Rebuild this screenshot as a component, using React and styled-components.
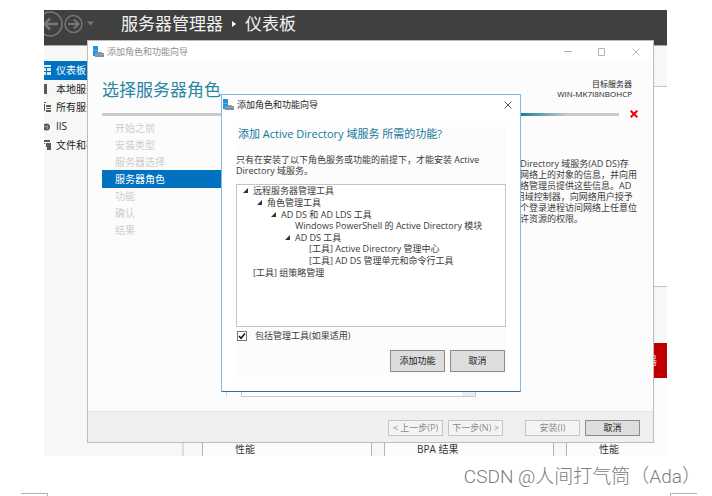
// App.jsx
import React, { useState } from "react";
import styled, { createGlobalStyle } from "styled-components";

const GlobalStyle = createGlobalStyle`
  * {
    box-sizing: border-box;
  }

  body {
    margin: 0;
    background: #ffffff;
    color: #3a3a3a;
    font-family: "Open Sans", "Noto Sans CJK SC", sans-serif;
    font-size: 9px;
  }

  h1, h2, p, ul {
    margin: 0;
    padding: 0;
    font-weight: 400;
  }

  ul {
    list-style: none;
  }

  button, input {
    font: inherit;
    margin: 0;
  }
`;

const Page = styled.div`
  min-height: 100vh;
  display: flex;
  flex-direction: column;
  padding-top: 10px;
`;

const Desktop = styled.div`
  position: relative;
  flex: 1;
  display: flex;
  flex-direction: column;
  margin: 0 45px 0 44px;
  overflow: hidden;
  background: #f7f7f7;
`;

const TopBar = styled.header`
  display: flex;
  align-items: flex-start;
  height: 36px;
  background: #404040;
  border-bottom: 1px solid #a8a8a8;
  color: #f2f2f2;
`;

const HistoryIcons = styled.svg`
  width: 56px;
  height: 30px;
  margin-right: 21px;
`;

const Crumbs = styled.h1`
  display: flex;
  align-items: center;
  gap: 9px;
  font-size: 17px;
  line-height: 28px;
`;

const Workspace = styled.div`
  flex: 1;
  display: flex;
`;

const Sidebar = styled.nav`
  width: 140px;
  padding-top: 15px;
  border-right: 2px solid #dedede;
`;

const SideList = styled.ul`
  display: grid;
  grid-auto-rows: 1fr;
  height: 93px;
`;

const SideLink = styled.a`
  display: flex;
  align-items: center;
  gap: 5px;
  height: 100%;
  font-size: 10px;
  line-height: 16px;
  text-decoration: none;
  white-space: nowrap;
  color: ${(props) => (props.$active ? "#ffffff" : "#222222")};
  background: ${(props) => (props.$active ? "#0072c0" : "transparent")};

  svg {
    width: 7px;
    height: 10px;
  }
`;

const Main = styled.main`
  flex: 1;
  display: flex;
  flex-direction: column;
  gap: 56px;
  padding: 40px 0 0 18px;
`;

const Welcome = styled.section`
  height: 201px;
  background: #ffffff;
  border: solid #c4c4c4;
  border-width: 1px 0 1px 1px;
`;

const Tiles = styled.div`
  flex: 1;
  display: grid;
  grid-template-columns: 170px 170px 1fr;
  gap: 12px;
`;

const Tile = styled.section`
  display: flex;
  flex-direction: column;
  justify-content: space-between;
  background: #fcfcfc;
  border: solid #b4b4b4;
  border-width: 0 1px;
  font-size: 10px;
  line-height: 14px;
  white-space: nowrap;
  overflow: hidden;

  &:last-child {
    border-right: none;
  }
`;

const TileHeader = styled.div`
  height: 35px;
  padding-left: 35px;
  line-height: 35px;
  font-size: 11px;
  color: #f6dcdc;
  background: #c00000;
`;

const TileRow = styled.a`
  padding-left: 32px;
  color: #333333;
  text-decoration: none;
`;

const Wizard = styled.section`
  position: absolute;
  top: 30px;
  right: 13px;
  bottom: 13px;
  left: 43px;
  display: flex;
  flex-direction: column;
  background: #fcfcfc;
  border: 1px solid #bdbdbd;
`;

const TitleBar = styled.div`
  display: flex;
  align-items: center;
  gap: 3px;
  height: ${(props) => (props.$small ? "19px" : "21px")};
  line-height: 14px;
  padding-left: ${(props) => (props.$small ? "1px" : "5px")};
  background: #ffffff;
  color: ${(props) => (props.$small ? "#222222" : "#8f8f8f")};
`;

const TitleIcon = styled.svg`
  width: 11px;
  height: 11px;
`;

const TitleText = styled.span`
  flex: 1;
`;

const WindowButton = styled.button`
  display: flex;
  align-items: center;
  justify-content: center;
  width: ${(props) => (props.$small ? "24px" : "34px")};
  height: 100%;
  padding: 0;
  border: none;
  background: none;
  color: ${(props) => (props.$small ? "#444444" : "#b4b4b4")};

  svg {
    width: 8px;
    height: 8px;
  }
`;

const WindowControls = styled.div`
  display: flex;
  height: 100%;
`;

const WizardHeader = styled.header`
  display: flex;
  justify-content: space-between;
  align-items: center;
  height: 48px;
  padding: 7px 21px 0 14px;
`;

const WizardTitle = styled.h1`
  font-size: 17px;
  line-height: 24px;
  color: #2b86a5;
`;

const Target = styled.div`
  padding-bottom: 2px;
  font-size: 8px;
  line-height: 10px;
  text-align: right;
  color: #222222;
`;

const Progress = styled.div`
  display: flex;
  align-items: center;
  gap: 11px;
  height: 8px;
  padding: 0 15px 0 14px;

  svg {
    width: 8px;
    height: 8px;
  }
`;

const ProgressTrack = styled.div`
  flex: 1;
  height: 3px;
  background: linear-gradient(
    to right,
    #cbcbcb 0,
    #cbcbcb 40%,
    #1c7c9e 62%,
    #1c7c9e 81%,
    #cbcbcb 90%
  );
`;

const WizardBody = styled.div`
  flex: 1;
  display: flex;
  padding: 0 13px 14px 14px;
`;

const Steps = styled.nav`
  width: 125px;
  padding-top: 1px;
  border-right: 1px solid #d8d8d8;
`;

const StepList = styled.ul`
  display: grid;
  grid-auto-rows: 1fr;
  height: 120px;
`;

const Step = styled.li`
  display: flex;
  align-items: center;
  padding-left: 13px;
  font-size: 10px;
  line-height: 16px;
  color: ${(props) => (props.$active ? "#ffffff" : "#cecece")};
  background: ${(props) => (props.$active ? "#0072c0" : "transparent")};
`;

const RoleBox = styled.div`
  display: flex;
  justify-content: flex-end;
  width: 235px;
  margin: 60px 17px 0 14px;
  background: #ffffff;
  border: 1px solid #c8c8c8;
`;

const RoleScroll = styled.div`
  width: 13px;
  background: #ececec;
`;

const Details = styled.p`
  flex: 1;
  padding-top: 40px;
  line-height: 11px;
  white-space: nowrap;
`;

const WizardFooter = styled.footer`
  display: flex;
  justify-content: flex-end;
  align-items: center;
  gap: 5px;
  height: 31px;
  padding: 2px 13px 0 0;
  background: #efefef;
  border-top: 1px solid #e6e6e6;
`;

const FooterGroup = styled.div`
  display: flex;
  gap: 5px;
  margin-right: 17px;
`;

const Button = styled.button`
  width: 55px;
  height: ${(props) => (props.$tall ? "22px" : "16px")};
  padding: 0;
  line-height: 12px;
  white-space: nowrap;
  color: #222222;
  background: #dddddd;
  border: 1px solid #8c8c8c;

  &:disabled {
    color: #8a8a8a;
    background: #f4f4f4;
    border-color: #c4c4c4;
  }
`;

const Dialog = styled.section`
  position: absolute;
  top: 84px;
  left: 177px;
  width: 300px;
  background: #ffffff;
  border: 1px solid #7fbbea;
  border-bottom-color: #2f6f9f;
`;

const DialogPanel = styled.div`
  margin: 13px 14px 14px;
  padding-bottom: 5px;
  background: #fcfcfc;
`;

const DialogTitle = styled.h2`
  padding-left: 2px;
  font-size: 11px;
  line-height: 14px;
  color: #14789b;
`;

const DialogText = styled.p`
  padding: 13px 0 8px;
  line-height: 11px;
  white-space: nowrap;
`;

const TreeBox = styled.div`
  height: 143px;
  background: #ffffff;
  border: 1px solid #c4c4c4;
`;

const Tree = styled.ul`
  display: grid;
  grid-auto-rows: 1fr;
  height: 93px;
`;

const TreeRow = styled.li`
  display: flex;
  align-items: center;
  gap: 5px;
  padding-left: ${(props) => 6 + props.$level * 14}px;
  line-height: 11px;
  white-space: nowrap;

  svg {
    width: 5px;
    height: 5px;
  }
`;

const CheckRow = styled.label`
  display: flex;
  align-items: center;
  gap: 8px;
  height: 18px;
  padding-left: 1px;
  line-height: 12px;
`;

const CheckBox = styled.span`
  display: grid;
  width: 10px;
  height: 10px;

  input,
  svg {
    grid-area: 1 / 1;
    width: 10px;
    height: 10px;
  }

  input {
    appearance: none;
    background: #ffffff;
    border: 1px solid #777777;
  }

  svg {
    display: none;
    pointer-events: none;
  }

  input:checked + svg {
    display: block;
  }
`;

const DialogActions = styled.div`
  display: flex;
  justify-content: flex-end;
  gap: 5px;
  padding: 5px 1px 0 0;
`;

const PageFooter = styled.footer`
  height: 40px;
  display: flex;
  flex-direction: column;
  justify-content: space-between;
  padding: 0 15px 0 21px;
`;

const Signature = styled.div`
  align-self: flex-end;
  margin-right: -4px;
  padding-top: 4px;
  font-family: Roboto, "Noto Sans CJK SC", sans-serif;
  font-size: 19px;
  font-weight: 300;
  line-height: 33px;
  white-space: nowrap;
  color: #7d7d7d;
`;

const Marks = styled.div`
  display: flex;
  justify-content: space-between;
  height: 3px;
`;

const Mark = styled.span`
  width: 27px;
  border: solid #b0b0b0;
  border-width: ${(props) => (props.$right ? "1px 0 0 1px" : "1px 1px 0 0")};
`;

const sideItems = [
  { label: "仪表板", icon: "dashboard" },
  { label: "本地服务器", icon: "local" },
  { label: "所有服务器", icon: "all" },
  { label: "IIS", icon: "iis" },
  { label: "文件和存储服务", icon: "files" },
];

const steps = ["开始之前", "安装类型", "服务器选择", "服务器角色", "功能", "确认", "结果"];

const tree = [
  { level: 0, label: "远程服务器管理工具", open: true },
  { level: 1, label: "角色管理工具", open: true },
  { level: 2, label: "AD DS 和 AD LDS 工具", open: true },
  { level: 3, label: "Windows PowerShell 的 Active Directory 模块" },
  { level: 3, label: "AD DS 工具", open: true },
  { level: 4, label: "[工具] Active Directory 管理中心" },
  { level: 4, label: "[工具] AD DS 管理单元和命令行工具" },
  { level: 0, label: "[工具] 组策略管理" },
];

const sideShapes = {
  dashboard: <path d="M0 0h7v2H0zM0 3h2v3H0zM3 3h4v3H3zM0 7h2v3H0zM3 7h4v3H3z" />,
  local: <path d="M0 0h3v10H0z" />,
  all: <path d="M0 0h2v1H0zM0 2h1v7H0zM2 3h5v2H2zM2 6h5v1H2zM2 8h5v2H2z" />,
  iis: (
    <>
      <circle cx="2.5" cy="6" r="3.5" />
      <path d="M0 6l3-1 1 1-1 2" stroke="#c9c9c9" strokeWidth="0.8" fill="none" />
    </>
  ),
  files: <path d="M0 0h6v2H0zM0 3h1v1H0zM2 3h5v7H3V7H2z" />,
};

function SideIcon({ name }) {
  return (
    <svg viewBox="0 0 7 10" fill={name === "dashboard" ? "#d9ecf8" : "#5a5a5a"}>
      {sideShapes[name]}
    </svg>
  );
}

function ServerIcon() {
  return (
    <TitleIcon viewBox="0 0 11 11">
      <path d="M0 0h5v10H0z" fill="#2394dc" />
      <path d="M0 4.5h5" stroke="#7cc3f0" strokeWidth="0.6" />
      <path d="M4.5 8V6.500h4V8" stroke="#8aa0ae" fill="none" />
      <path d="M2 7h9v4H2z" fill="#7892a5" />
      <path d="M2 8.5h9" stroke="#9db2c0" strokeWidth="0.6" />
    </TitleIcon>
  );
}

function CloseIcon() {
  return (
    <svg viewBox="0 0 8 8" fill="none" stroke="currentColor" strokeWidth="0.9">
      <path d="M0.5 0.5l7 7M7.5 0.5l-7 7" />
    </svg>
  );
}

function AddFeaturesDialog() {
  const [includeTools, setIncludeTools] = useState(true);

  return (
    <Dialog role="dialog" aria-labelledby="dialog-title">
      <TitleBar $small>
        <ServerIcon />
        <TitleText>添加角色和功能向导</TitleText>
        <WindowButton $small aria-label="关闭">
          <CloseIcon />
        </WindowButton>
      </TitleBar>
      <DialogPanel>
        <DialogTitle id="dialog-title">
          添加 Active Directory 域服务 所需的功能?
        </DialogTitle>
        <DialogText>
          只有在安装了以下角色服务或功能的前提下，才能安装 Active
          <br />
          Directory 域服务。
        </DialogText>
        <TreeBox>
          <Tree>
            {tree.map((row) => (
              <TreeRow key={row.label} $level={row.level}>
                <svg viewBox="0 0 5 5" fill="#333333">
                  {row.open && <path d="M5 0v5H0z" />}
                </svg>
                {row.label}
              </TreeRow>
            ))}
          </Tree>
        </TreeBox>
        <CheckRow>
          <CheckBox>
            <input
              type="checkbox"
              checked={includeTools}
              onChange={(e) => setIncludeTools(e.target.checked)}
            />
            <svg viewBox="0 0 10 10" fill="none" stroke="#111111" strokeWidth="1.5">
              <path d="M2 5l2 2.3L8 2.5" />
            </svg>
          </CheckBox>
          包括管理工具(如果适用)
        </CheckRow>
        <DialogActions>
          <Button $tall>添加功能</Button>
          <Button $tall>取消</Button>
        </DialogActions>
      </DialogPanel>
    </Dialog>
  );
}

function RolesWizard() {
  return (
    <Wizard>
      <TitleBar>
        <ServerIcon />
        <TitleText>添加角色和功能向导</TitleText>
        <WindowControls>
          <WindowButton aria-label="最小化">
            <svg viewBox="0 0 8 8" stroke="currentColor">
              <path d="M0 3.5h8" />
            </svg>
          </WindowButton>
          <WindowButton aria-label="最大化">
            <svg viewBox="0 0 8 8" fill="none" stroke="currentColor">
              <path d="M0.5 0.5h6v7h-6z" />
            </svg>
          </WindowButton>
          <WindowButton aria-label="关闭">
            <CloseIcon />
          </WindowButton>
        </WindowControls>
      </TitleBar>
      <WizardHeader>
        <WizardTitle>选择服务器角色</WizardTitle>
        <Target>
          目标服务器
          <br />
          WIN-MK7I8NBOHCP
        </Target>
      </WizardHeader>
      <Progress>
        <ProgressTrack />
        <svg viewBox="0 0 8 8" stroke="#f00000" strokeWidth="2">
          <path d="M0.7 0.7l6.6 6.6M7.3 0.7L0.7 7.3" />
        </svg>
      </Progress>
      <WizardBody>
        <Steps>
          <StepList>
            {steps.map((step) => (
              <Step key={step} $active={step === "服务器角色"}>
                {step}
              </Step>
            ))}
          </StepList>
        </Steps>
        <RoleBox>
          <RoleScroll />
        </RoleBox>
        <Details>
          Active Directory 域服务(AD DS)存
          <br />
          储有关网络上的对象的信息，并向用
          <br />
          户和网络管理员提供这些信息。AD
          <br />
          DS 使用域控制器，向网络用户授予
          <br />
          通过单个登录进程访问网络上任意位
          <br />
          置的允许资源的权限。
        </Details>
      </WizardBody>
      <WizardFooter>
        <FooterGroup>
          <Button disabled>&lt; 上一步(P)</Button>
          <Button disabled>下一步(N) &gt;</Button>
        </FooterGroup>
        <Button disabled>安装(I)</Button>
        <Button>取消</Button>
      </WizardFooter>
    </Wizard>
  );
}

function App() {
  return (
    <Page>
      <GlobalStyle />
      <Desktop>
        <TopBar>
          <HistoryIcons viewBox="0 0 56 30" fill="none" stroke="#777777">
            <circle cx="6" cy="14" r="12" strokeWidth="1.5" />
            <path d="M14 14H1M6 8.5L0.5 14L6 19.5" strokeWidth="2.5" />
            <circle cx="29.5" cy="14" r="8.5" strokeWidth="1.5" />
            <path d="M24 14h10M30 9.5l4.5 4.5l-4.5 4.5" strokeWidth="2" />
            <path d="M43 11.5h7l-3.5 4z" fill="#777777" stroke="none" />
          </HistoryIcons>
          <Crumbs>
            服务器管理器
            <svg width="4" height="6" viewBox="0 0 4 6" fill="#ffffff">
              <path d="M0 0l4 3l-4 3z" />
            </svg>
            仪表板
          </Crumbs>
        </TopBar>
        <Workspace>
          <Sidebar>
            <SideList>
              {sideItems.map((item) => (
                <li key={item.label}>
                  <SideLink href="#" $active={item.icon === "dashboard"}>
                    <SideIcon name={item.icon} />
                    {item.label}
                  </SideLink>
                </li>
              ))}
            </SideList>
          </Sidebar>
          <Main>
            <Welcome />
            <Tiles>
              <Tile>
                <TileHeader />
                <TileRow href="#">性能</TileRow>
              </Tile>
              <Tile>
                <TileHeader />
                <TileRow href="#">BPA 结果</TileRow>
              </Tile>
              <Tile>
                <TileHeader>所有服务器</TileHeader>
                <TileRow href="#">性能</TileRow>
              </Tile>
            </Tiles>
          </Main>
        </Workspace>
        <RolesWizard />
        <AddFeaturesDialog />
      </Desktop>
      <PageFooter>
        <Signature>CSDN @人间打气筒（Ada）</Signature>
        <Marks>
          <Mark />
          <Mark $right />
        </Marks>
      </PageFooter>
    </Page>
  );
}

export default App;
